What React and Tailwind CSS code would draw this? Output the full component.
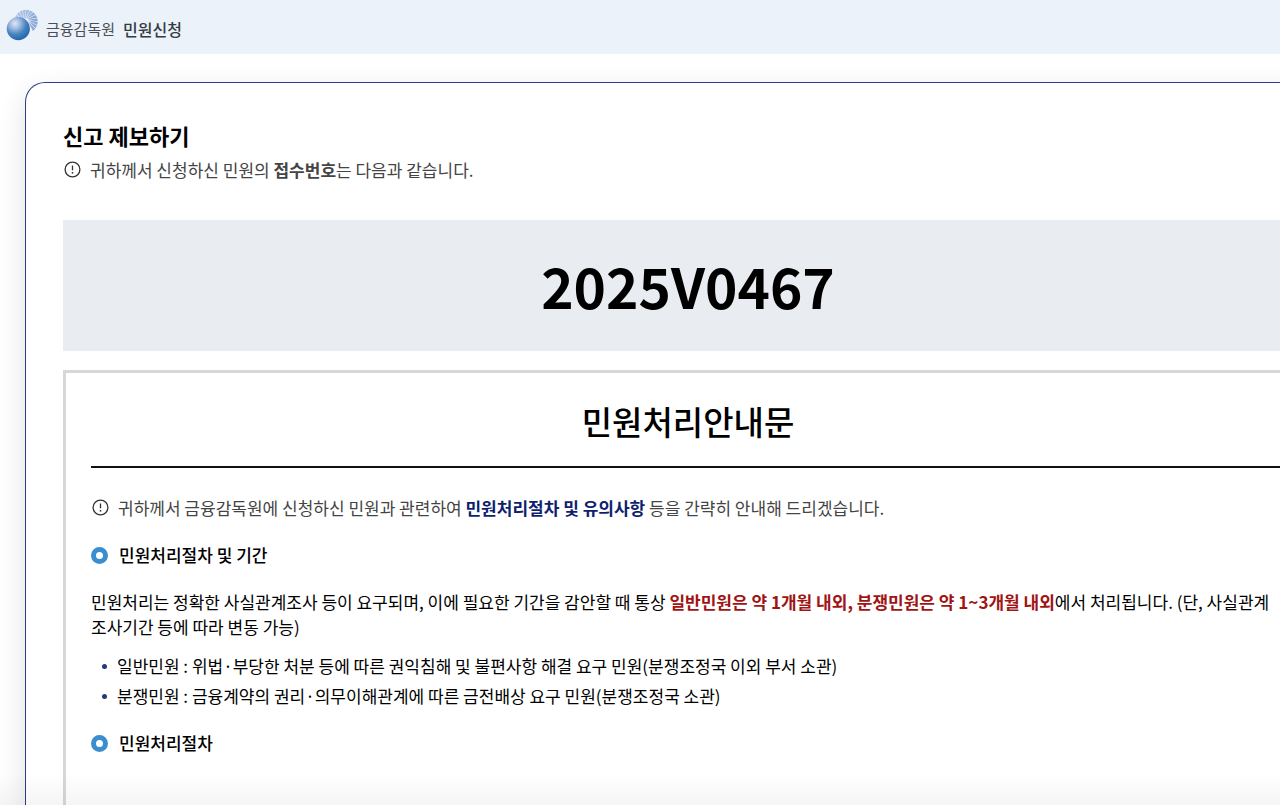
import clsx from 'clsx'

// angle (degrees, clockwise from left) and opacity of each ray behind the globe
const RAYS = [
  { angle: 10, opacity: 0.6 },
  { angle: 28, opacity: 0.6 },
  { angle: 46, opacity: 0.65 },
  { angle: 64, opacity: 0.65 },
  { angle: 82, opacity: 0.7 },
  { angle: 100, opacity: 0.75 },
  { angle: 118, opacity: 0.8 },
  { angle: 136, opacity: 0.9 },
  { angle: 154, opacity: 1 },
  { angle: 172, opacity: 1 },
  { angle: 190, opacity: 1 },
  { angle: 208, opacity: 1 },
  { angle: 226, opacity: 1 },
]

const CASE_TYPES = [
  '일반민원 : 위법·부당한 처분 등에 따른 권익침해 및 불편사항 해결 요구 민원(분쟁조정국 이외 부서 소관)',
  '분쟁민원 : 금융계약의 권리·의무이해관계에 따른 금전배상 요구 민원(분쟁조정국 소관)',
]

function Logo() {
  return (
    <svg className="size-8 shrink-0" viewBox="0 0 32 32" aria-hidden="true">
      <defs>
        <radialGradient id="globe" cx="0.36" cy="0.28" r="0.72">
          <stop offset="0" stopColor="#dfe8f4" />
          <stop offset="0.3" stopColor="#a3bde0" />
          <stop offset="0.65" stopColor="#4a83c0" />
          <stop offset="1" stopColor="#2469ae" />
        </radialGradient>
      </defs>
      {RAYS.map(({ angle, opacity }) => (
        <path
          key={angle}
          d="M18 14 L8.4 10.9 L8.4 14.1 Z"
          fill="#8ba8d8"
          fillOpacity={opacity}
          transform={`rotate(${angle} 20 12.5)`}
        />
      ))}
      <circle cx="12.3" cy="19.6" r="11.6" fill="url(#globe)" />
    </svg>
  )
}

function NoticeIcon() {
  return (
    <svg className="mt-1 size-[18px] shrink-0" viewBox="0 0 18 18" fill="none" stroke="#333" aria-hidden="true">
      <circle cx="9.5" cy="8.5" r="7.4" strokeWidth="1.3" />
      <path d="M9.5 4.5v4.8" strokeWidth="1.3" />
      <path d="M9.5 11v1.6" strokeWidth="1.5" />
    </svg>
  )
}

function Notice({ className, children }) {
  return (
    <p className={clsx('flex gap-[9px] leading-[26px] text-[#444]', className)}>
      <NoticeIcon />
      <span>{children}</span>
    </p>
  )
}

function SectionTitle({ children }) {
  return (
    <h3 className="flex items-center gap-[11px] font-medium leading-[26px]">
      <span className="size-[17px] rounded-full border-[5px] border-[#3a8dcf] bg-white" />
      {children}
    </h3>
  )
}

function App() {
  return (
    <div className="relative flex h-screen flex-col overflow-hidden bg-white font-['Noto_Sans_CJK_KR',sans-serif] text-[17px] text-black">
      <header className="flex h-[54px] shrink-0 items-center bg-[#ebf2fa] px-1.5 pb-1">
        <Logo />
        <span className="ml-2 mt-2 text-[15px] leading-6 text-[#4b4f55]">금융감독원</span>
        <a href="#" className="ml-2 mt-2 text-base font-medium leading-6 text-[#333a42]">
          민원신청
        </a>
      </header>

      <main className="-mr-24 flex min-h-0 flex-1 flex-col px-[25px] pt-7">
        <section className="flex-1 rounded-t-[20px] border border-b-0 border-[#2a4088] px-[37px] pt-9 shadow-[0_10px_28px_rgba(0,0,0,0.12)]">
          <h1 className="text-[22px] font-bold leading-8">신고 제보하기</h1>
          <Notice className="mt-1.5">
            귀하께서 신청하신 민원의 <strong className="font-bold">접수번호</strong>는 다음과 같습니다.
          </Notice>

          <p className="mt-[37px] bg-[#e9ecf1] text-center text-[55px] font-bold leading-[131px]">2025V0467</p>

          <article className="mt-[19px] h-full border-[3px] border-b-0 border-[#d7d7d7] px-[25px] pt-[23px]">
            <h2 className="border-b-2 border-[#111] pb-5 text-center text-[33px] font-medium leading-[50px]">
              민원처리안내문
            </h2>
            <Notice className="mb-[21px] mt-[27px]">
              귀하께서 금융감독원에 신청하신 민원과 관련하여{' '}
              <strong className="font-bold text-[#0f1f6e]">민원처리절차 및 유의사항</strong> 등을 간략히 안내해
              드리겠습니다.
            </Notice>

            <SectionTitle>민원처리절차 및 기간</SectionTitle>
            <p className="mb-3 mt-[21px] break-keep leading-[25px]">
              민원처리는 정확한 사실관계조사 등이 요구되며, 이에 필요한 기간을 감안할 때 통상{' '}
              <strong className="font-bold text-[#a01414]">일반민원은 약 1개월 내외, 분쟁민원은 약 1~3개월 내외</strong>
              에서 처리됩니다. (단, 사실관계 조사기간 등에 따라 변동 가능)
            </p>
            <ul className="mb-[19px] pl-[11px]">
              {CASE_TYPES.map((text) => (
                <li key={text} className="flex items-center gap-2.5 leading-[30px]">
                  <span className="size-[5px] rounded-full bg-[#23397c]" />
                  {text}
                </li>
              ))}
            </ul>
            <SectionTitle>민원처리절차</SectionTitle>
          </article>
        </section>
      </main>

      {/* fade at the bottom edge of the viewport */}
      <div className="pointer-events-none absolute inset-x-0 bottom-0 h-8 bg-linear-to-b from-transparent to-black/4" />
    </div>
  )
}

export default App
